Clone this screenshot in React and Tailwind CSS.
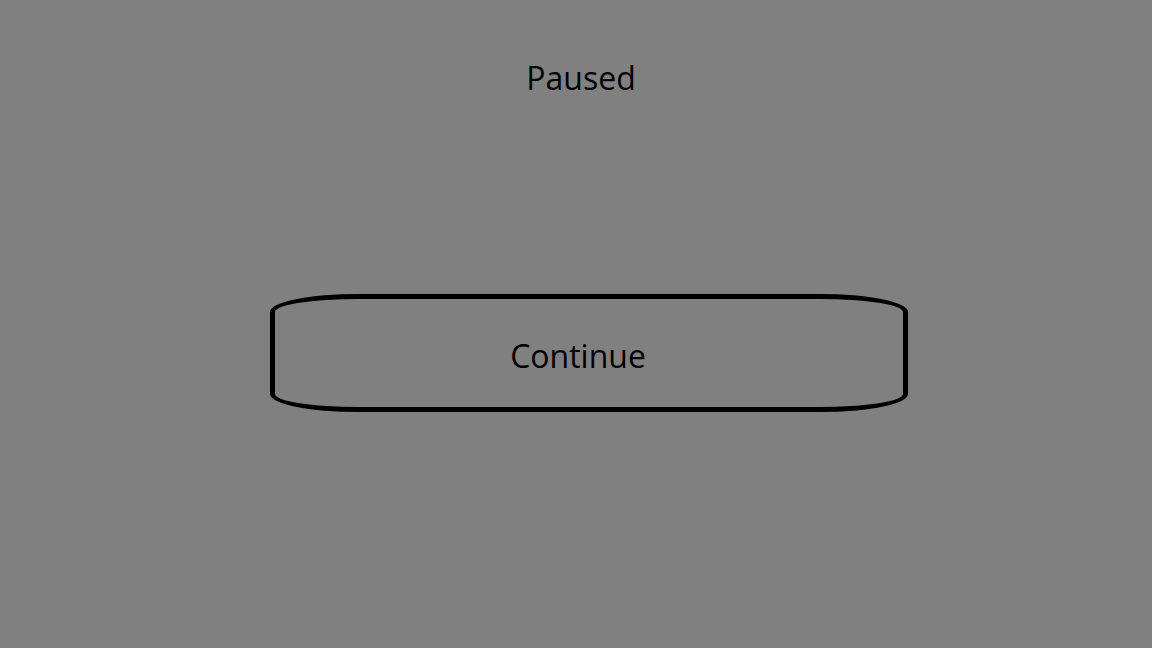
import React from 'react';

export default function App() {
  return (
    <div
      className="w-[1152px] h-[648px] bg-[#808080] text-black flex flex-col"
      style={{ fontFamily: '"Open Sans", "Noto Sans", sans-serif' }}
    >
      {/* Title */}
      <div className="pt-[57px] pl-[10px] text-center text-[32px] leading-[42px]">Paused</div>

      {/* Continue button */}
      <button
        className="mt-[195px] ml-[270px] w-[638px] h-[118px] border-[5px] border-black rounded-[88px/18px] flex items-center justify-center pr-[22px] pt-[5px] text-[32px] leading-[42px] bg-transparent"
      >
        Continue
      </button>
    </div>
  );
}
